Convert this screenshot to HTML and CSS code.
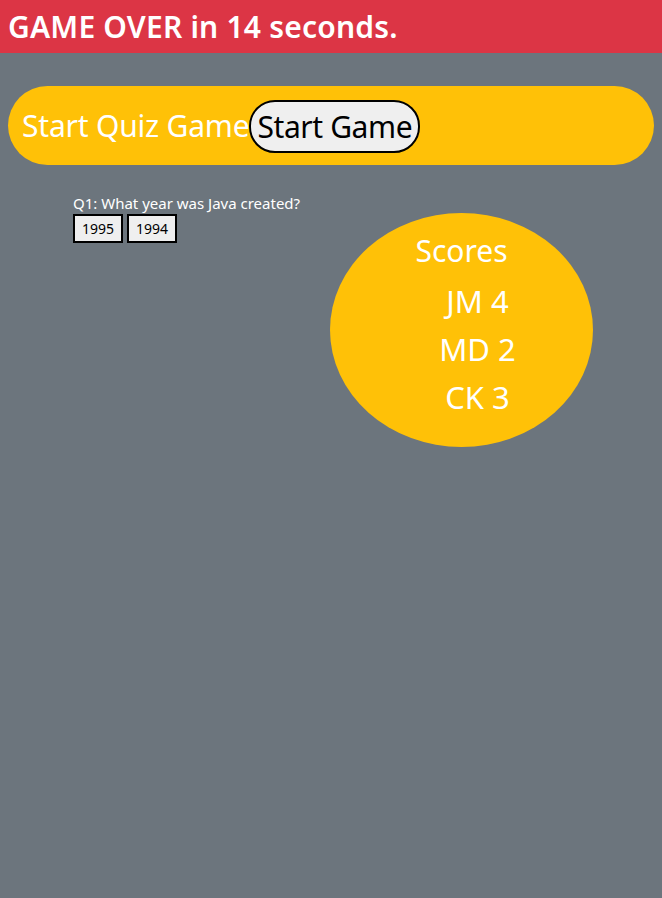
FILE: index.html
```html
<!DOCTYPE html>
<html lang="en">
<head>
<meta charset="utf-8">
<title>Quiz Game</title>
<link rel="stylesheet" href="styles.css">
</head>
<body>
<header class="banner">
  <h1 class="banner-title">GAME OVER in 14 seconds.</h1>
</header>
<main class="page">
  <section class="start-card">
    <h2 class="start-title">Start Quiz Game</h2>
    <button class="start-btn" type="button">Start Game</button>
  </section>
  <div class="content">
    <div class="question">
      <p class="question-text">Q1: What year was Java created?</p>
      <div class="answers">
        <button class="answer" type="button">1995</button>
        <button class="answer" type="button">1994</button>
      </div>
    </div>
    <div class="scores">
      <h3 class="scores-title">Scores</h3>
      <ul class="scores-list">
        <li>JM 4</li>
        <li>MD 2</li>
        <li>CK 3</li>
      </ul>
    </div>
  </div>
</main>
</body>
</html>
```
FILE: styles.css
```css
html, body {
  margin: 0;
  padding: 0;
}
body {
  background: #6c757d;
  font-family: "Noto Sans", "Open Sans", sans-serif;
  color: #fff;
  min-height: 898px;
}
.banner {
  background: #dc3545;
  height: 53px;
  display: flex;
  align-items: center;
  padding: 0 8px;
}
.banner-title {
  margin: 0;
  font-size: 30px;
  font-weight: 600;
  letter-spacing: 0.2px;
}
.page {
  padding: 33px 8px 0;
}
.start-card {
  background: #ffc107;
  height: 79px;
  border-radius: 40px;
  display: flex;
  align-items: center;
  padding: 0 14px;
}
.start-title {
  margin: 0;
  font-size: 30px;
  font-weight: 400;
  letter-spacing: -0.2px;
}
.start-btn {
  font-family: inherit;
  font-size: 30px;
  letter-spacing: -0.4px;
  background: #efefef;
  color: #000;
  border: 2px solid #000;
  border-radius: 26px;
  height: 53px;
  padding: 0 6px;
  margin-top: 1px;
}
.content {
  display: grid;
  grid-template-columns: 257px 263px;
  padding-left: 65px;
  margin-top: 27px;
}
.question-text {
  margin: 0;
  font-size: 15px;
  line-height: 22px;
}
.answers {
  display: flex;
  gap: 4px;
}
.answer {
  font-family: inherit;
  font-size: 14px;
  background: #efefef;
  color: #000;
  border: 2px solid #000;
  height: 29px;
  padding: 0 7px;
}
.scores {
  margin-top: 21px;
  height: 234px;
  background: #ffc107;
  border-radius: 50%;
  text-align: center;
  box-sizing: border-box;
  padding-top: 16px;
}
.scores-title {
  margin: 0;
  font-size: 30px;
  font-weight: 400;
  line-height: 44px;
}
.scores-list {
  list-style: none;
  margin: 0;
  padding: 4px 0 0 32px;
  font-size: 31px;
  line-height: 48px;
}
```
